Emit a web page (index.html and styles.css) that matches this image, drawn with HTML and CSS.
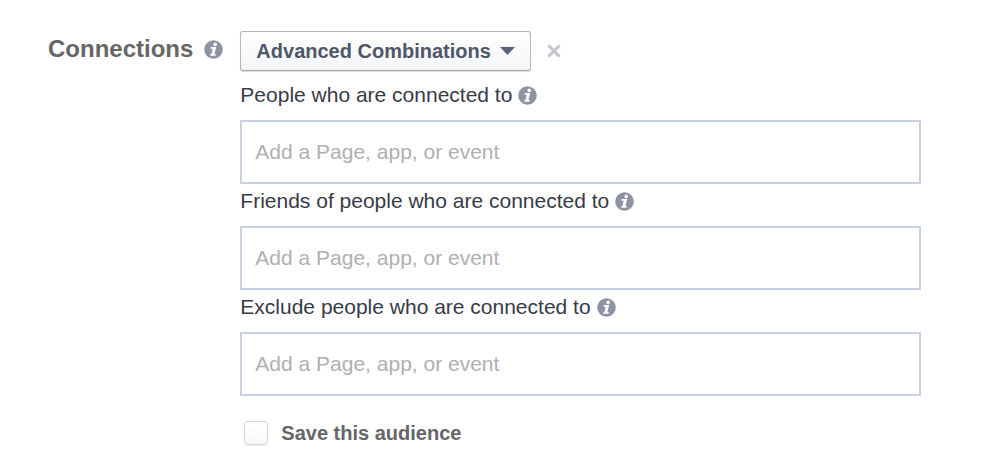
FILE: index.html
```
<!DOCTYPE html>
<html lang="en">

<head>
    <meta charset="UTF-8">
    <meta name="viewport" content="width=device-width, initial-scale=1.0">
    <title>Connections</title>
    <link rel="stylesheet" href="styles.css">
</head>

<body>

    <!-- info icon, reused next to each label -->
    <svg class="sprite" aria-hidden="true">
        <symbol id="info" viewBox="0 0 19 19">
            <circle cx="9.5" cy="9.5" r="9.3" fill="#8d93a3" />
            <circle cx="11.2" cy="4.4" r="1.8" fill="#fff" />
            <path d="M6.8 7h5.4l-1.8 7.1h1.4l-.4 1.7H6.2l.4-1.7h.8l1.3-5.3H6.4z" fill="#fff" />
        </symbol>
    </svg>

    <form class="connections">
        <div class="title">
            <span>Connections</span>
            <svg class="info"><use href="#info" /></svg>
        </div>

        <div class="content">
            <div class="toolbar">
                <button type="button" class="dropdown">
                    Advanced Combinations
                    <svg class="arrow" viewBox="0 0 15 8"><path d="M0 0h15L7.5 8z" fill="#5b6275" /></svg>
                </button>
                <button type="button" class="remove" aria-label="Remove">
                    <svg viewBox="0 0 14 14"><path d="M1.5 1.5l11 11M12.5 1.5l-11 11" stroke="#c2c4cb" stroke-width="3" /></svg>
                </button>
            </div>

            <div class="field">
                <label for="connected">People who are connected to <svg class="info"><use href="#info" /></svg></label>
                <input type="text" id="connected" placeholder="Add a Page, app, or event">
            </div>

            <div class="field">
                <label for="friends">Friends of people who are connected to <svg class="info"><use href="#info" /></svg></label>
                <input type="text" id="friends" placeholder="Add a Page, app, or event">
            </div>

            <div class="field">
                <label for="exclude">Exclude people who are connected to <svg class="info"><use href="#info" /></svg></label>
                <input type="text" id="exclude" placeholder="Add a Page, app, or event">
            </div>

            <div class="save">
                <input type="checkbox" id="save">
                <label for="save">Save this audience</label>
            </div>
        </div>
    </form>

</body>

</html>
```

FILE: styles.css
```
* {
    box-sizing: border-box;
}

body {
    margin: 0;
    background-color: #fff;
    font-family: "Liberation Sans", Arial, sans-serif;
}

.sprite {
    display: none;
}

.connections {
    display: flex;
    gap: 17px;
    padding: 31px 79px 16px 48px;
}

.title {
    display: flex;
    align-items: center;
    gap: 11px;
    height: 36px;
    color: #666;
    font-size: 24px;
    font-weight: bold;
}

.info {
    flex: none;
    width: 19px;
    height: 19px;
}

.content {
    flex: 1;
    min-width: 0;
}

.toolbar {
    display: flex;
    align-items: center;
    gap: 16px;
    margin-bottom: 7px;
}

.dropdown {
    display: flex;
    align-items: center;
    gap: 9px;
    height: 40px;
    padding: 0 15px;
    border: 1px solid #b4b6bb;
    border-bottom-color: #a5a7ac;
    border-radius: 3px;
    background: linear-gradient(#fff, #f4f5f7);
    box-shadow: 0 1px 1px rgba(0, 0, 0, 0.15);
    color: #4e5669;
    font-family: inherit;
    font-size: 20px;
    font-weight: bold;
    cursor: pointer;
}

.arrow {
    width: 15px;
    height: 8px;
}

.remove {
    display: flex;
    padding: 0;
    border: none;
    background: none;
    cursor: pointer;
}

.remove svg {
    width: 14px;
    height: 14px;
}

.field label {
    display: flex;
    align-items: center;
    gap: 6px;
    padding: 5px 0 13px;
    color: #373b47;
    font-size: 21px;
    line-height: 24px;
}

.field input {
    display: block;
    width: 100%;
    height: 64px;
    padding: 0 13px;
    border: 2px solid #c8d0e2;
    border-radius: 0;
    background-color: #fff;
    color: #373b47;
    font-family: inherit;
    font-size: 21px;
}

.field input::placeholder {
    color: #b0b0b0;
}

.save {
    display: flex;
    align-items: center;
    gap: 13px;
    margin-top: 25px;
    padding-left: 4px;
    color: #666;
    font-size: 20px;
    font-weight: bold;
    line-height: 24px;
}

.save input {
    appearance: none;
    width: 24px;
    height: 24px;
    margin: 0;
    border: 1px solid #d6d6d6;
    border-radius: 4px;
    background: linear-gradient(#fff, #f6f7f8);
    box-shadow: 0 1px 1px rgba(0, 0, 0, 0.1);
}

.save input:checked {
    background: #4e5669;
}
```
